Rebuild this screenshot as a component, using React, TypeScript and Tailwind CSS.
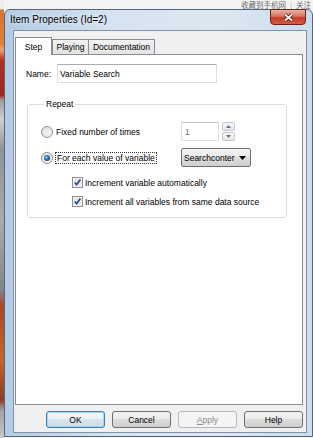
import React from 'react';

function Radio({ checked, id }: { checked?: boolean; id: string }) {
  return (
    <svg width="12" height="12" viewBox="0 0 12 12" className="shrink-0">
      <defs>
        <linearGradient id={`rf-${id}`} x1="0" y1="0" x2="1" y2="1">
          <stop offset="0" stopColor="#dcdcdc" />
          <stop offset="1" stopColor="#ffffff" />
        </linearGradient>
        <radialGradient id={`rd-${id}`} cx="0.4" cy="0.4" r="0.7">
          <stop offset="0" stopColor="#8fd0f8" />
          <stop offset="0.5" stopColor="#2a72b5" />
          <stop offset="1" stopColor="#0f3a66" />
        </radialGradient>
      </defs>
      <circle cx="6" cy="6" r="5.5" fill={`url(#rf-${id})`} stroke="#8e8f8f" />
      <circle cx="6" cy="6" r="4" fill="none" stroke="#e6e6e6" strokeWidth="0.8" />
      {checked && <circle cx="6" cy="6" r="3" fill={`url(#rd-${id})`} />}
    </svg>
  );
}

function Check() {
  return (
    <svg width="11" height="11" viewBox="0 0 11 11" className="shrink-0">
      <rect x="0.5" y="0.5" width="10" height="10" fill="#f4f4f4" stroke="#8e8f8f" />
      <rect x="2" y="2" width="7" height="7" fill="#e4e6ea" />
      <path d="M2.8 5.4 L4.6 7.6 L8.4 2.6" fill="none" stroke="#2d4a8c" strokeWidth="1.6" />
    </svg>
  );
}

function CloseButton() {
  return (
    <div className="-mt-px mr-[6px] flex h-[16px] w-[36px] items-center justify-center rounded-b-[4px] border border-[#6b2218] bg-[linear-gradient(to_bottom,#eab1a3_0%,#d9735f_45%,#c33f2a_55%,#d35a40_100%)]">
      <svg width="11" height="9" viewBox="0 0 11 9">
        <path d="M2 1.5 L9 7.5 M9 1.5 L2 7.5" stroke="#4a140c" strokeWidth="3.4" />
        <path d="M2 1.5 L9 7.5 M9 1.5 L2 7.5" stroke="#ffffff" strokeWidth="1.8" />
      </svg>
    </div>
  );
}

function Button({ label, kind }: { label: React.ReactNode; kind?: 'default' | 'disabled' }) {
  const base = 'flex h-[17px] w-[59px] items-center justify-center rounded-[3px] border text-[8.5px] leading-[10px]';
  if (kind === 'default') {
    return (
      <div className={`${base} border-[#3c7fb1] bg-[linear-gradient(to_bottom,#f2f8fc_0%,#e8f1f8_45%,#d9e6f0_50%,#cbdbe7_100%)] shadow-[inset_0_0_0_1px_#a6d7f2]`}>
        {label}
      </div>
    );
  }
  if (kind === 'disabled') {
    return <div className={`${base} border-[#b5b9bc] bg-[#f4f4f4] text-[#8c8c8c]`}>{label}</div>;
  }
  return (
    <div className={`${base} border-[#707070] bg-[linear-gradient(to_bottom,#f2f2f2_0%,#ebebeb_45%,#dddddd_50%,#cfcfcf_100%)]`}>
      {label}
    </div>
  );
}

function StepPanel() {
  return (
    <div className="flex h-[351px] flex-col border border-[#898c95] bg-white">
      <div className="flex items-center pl-[10px] pt-[9px]">
        <span className="w-[31px]">Name:</span>
        <div className="flex h-[19px] w-[160px] items-center border border-[#dbdfe6] border-t-[#abadb3] pl-[2px]">
          Variable Search
        </div>
      </div>

      <fieldset className="ml-[11px] mt-[16px] w-[260px] rounded-[3px] border border-[#d5dfe5] pb-[9px] pl-[13px] pt-[13px]">
        <legend className="ml-[3px] px-[2px] leading-[10px]">Repeat</legend>

        <div className="flex h-[19px] items-center">
          <div className="flex w-[140px] items-center gap-[2px]">
            <Radio id="a" />
            <span className="ml-[1px]">Fixed number of times</span>
          </div>
          <div className="flex h-[19px] w-[38px] items-center border border-[#dbdfe6] border-t-[#c2c5ca] pl-[3px] text-[#707070]">
            1
          </div>
          <div className="ml-[3px] flex h-[19px] w-[13px] flex-col gap-px">
            <div className="flex flex-1 items-center justify-center rounded-[2px] border border-[#c3c8cc] bg-[linear-gradient(to_bottom,#f7f7f7,#e6e6e6)]">
              <svg width="5" height="3" viewBox="0 0 5 3"><path d="M0 3 L2.5 0 L5 3 Z" fill="#5a7397" /></svg>
            </div>
            <div className="flex flex-1 items-center justify-center rounded-[2px] border border-[#c3c8cc] bg-[linear-gradient(to_bottom,#f7f7f7,#e6e6e6)]">
              <svg width="5" height="3" viewBox="0 0 5 3"><path d="M0 0 L5 0 L2.5 3 Z" fill="#5a7397" /></svg>
            </div>
          </div>
        </div>

        <div className="mt-[7px] flex h-[19px] items-center">
          <div className="flex w-[140px] items-center gap-[2px]">
            <Radio id="b" checked />
            <span className="border border-dotted border-[#333] px-px leading-[10px]">For each value of variable</span>
          </div>
          <div className="flex h-[19px] w-[70px] items-center justify-between rounded-[2px] border border-[#707070] bg-[linear-gradient(to_bottom,#f2f2f2_0%,#ebebeb_45%,#dddddd_50%,#cfcfcf_100%)] pl-[2px] pr-[4px]">
            <span>Searchconter</span>
            <svg width="7" height="4" viewBox="0 0 7 4"><path d="M0 0 L7 0 L3.5 4 Z" fill="#000" /></svg>
          </div>
        </div>

        <div className="mt-[9px] flex h-[13px] items-center gap-[2px] pl-[31px]">
          <Check />
          <span>Increment variable automatically</span>
        </div>
        <div className="mt-[6px] flex h-[13px] items-center gap-[2px] pl-[31px]">
          <Check />
          <span>Increment all variables from same data source</span>
        </div>
      </fieldset>
    </div>
  );
}

function Window() {
  return (
    <div className="flex h-[428px] flex-col rounded-t-[6px] border border-[#55657a] bg-[linear-gradient(to_right,#b3cbe5_0%,#d6e3f0_35%,#dde7f1_70%,#cbdcec_100%)]">
      <div className="flex h-[20px] items-start justify-between">
        <span className="ml-[5px] self-center text-[10px] leading-[12px] [text-shadow:0_0_5px_#ffffff]">
          Item Properties (Id=2)
        </span>
        <CloseButton />
      </div>

      <div className="ml-[8px] mr-[5px] flex h-[403px] flex-col border border-[#8092a8] bg-[#f0f0f0] pl-px pr-[3px] pt-[6px] text-[8.5px] leading-[10px]">
        <div className="relative z-10 flex h-[17px] items-end">
          <div className="-mb-px flex h-[18px] w-[37px] items-start justify-center border-x border-t border-[#898c95] bg-white pt-[4px]">
            Step
          </div>
          <div className="flex h-[15px] w-[36px] items-center justify-center border-l border-t border-[#898c95] bg-[linear-gradient(to_bottom,#f2f2f2,#e3e3e3)]">
            Playing
          </div>
          <div className="flex h-[15px] w-[67px] items-center justify-center border-x border-t border-[#898c95] bg-[linear-gradient(to_bottom,#f2f2f2,#e3e3e3)]">
            Documentation
          </div>
        </div>

        <StepPanel />

        <div className="mt-[6px] flex justify-end gap-[7px]">
          <Button label="OK" kind="default" />
          <Button label="Cancel" />
          <Button label={<><span className="underline">A</span>pply</>} kind="disabled" />
          <Button label="Help" />
        </div>
      </div>
      <div className="h-[3px]" />
    </div>
  );
}

export default function App() {
  return (
    <div className="flex h-[438px] w-[313px] overflow-hidden bg-[#f3f3f3] font-['Liberation_Sans',Arial,sans-serif] text-black">
      <div className="w-[4px] shrink-0 bg-[linear-gradient(to_bottom,#ececec_0px,#ececec_9px,#d8742c_10px,#e0823a_44px,#eaa373_50px,#b3301f_60px,#a3241c_95px,#9c9c9c_100px,#cfcfcf_120px,#8d939b_150px,#a8acb2_220px,#7f858c_290px,#a8472a_305px,#c4662c_360px,#8a3a26_400px,#a0a0a0_410px,#c8c8c8_438px)]" />
      <div className="flex w-[309px] flex-col">
        <div className="flex h-[9px] items-center justify-end pr-[2px]">
          <span className="font-['Noto_Sans_CJK_SC',sans-serif] text-[7.5px] leading-[9px] text-[#6a6a6a]">
            收藏到手机网<span className="mx-[4px] text-[#b0b0b0]">|</span>关注
          </span>
        </div>
        <Window />
        <div className="h-px" />
      </div>
    </div>
  );
}
